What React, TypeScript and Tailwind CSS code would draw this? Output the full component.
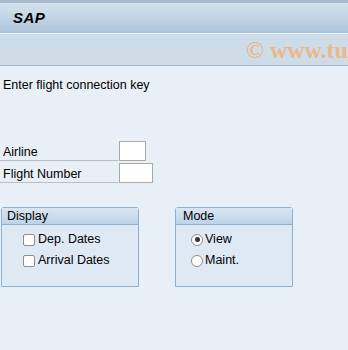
import React from "react";

export default function App() {
  const font = { fontFamily: '"Liberation Sans", Arial, sans-serif' };
  return (
    <div className="w-[348px] h-[350px] bg-[#e8eff6] overflow-hidden text-[12.5px] text-[#000]" style={font}>
      <div className="h-[33px] border-t-[3px] border-[#a9bbcd] bg-gradient-to-b from-[#d7e3ef] to-[#acc4da] flex items-center pl-[13px]">
        <span className="font-bold italic text-[15px] text-black tracking-[0.5px]">SAP</span>
      </div>
      <div className="h-px bg-[#eef3f8]" />
      <div className="h-[32px] bg-[#cedce8] border-b border-[#a4b6c9] flex items-center pl-[246px] overflow-hidden">
        <span className="whitespace-nowrap font-bold text-[24px] leading-[28px] text-[#e9b98c]" style={{ fontFamily: '"Liberation Serif", serif' }}>
          © www.tu
        </span>
      </div>
      <div className="pt-[11px]">
        <div className="pl-[3px] h-[16px] leading-[16px]">Enter flight connection key</div>
        <div className="mt-[48px] flex flex-col">
          <div className="flex items-end h-[20px]">
            <div className="w-[118px] border-b border-[#b8bec4] h-[20px] pl-[3px] leading-[22px]">Airline</div>
            <div className="ml-[1px] w-[27px] h-[20px] bg-white border border-[#a9a9a9]" />
          </div>
          <div className="flex items-end h-[22px]">
            <div className="w-[118px] border-b border-[#b8bec4] h-[20px] pl-[3px] leading-[22px]">Flight Number</div>
            <div className="ml-[1px] w-[34px] h-[20px] bg-white border border-[#a9a9a9]" />
          </div>
        </div>
        <div className="mt-[24px] flex">
          <div className="ml-[1px] w-[138px] h-[80px] border border-[#8fb0d0] rounded-t-[3px] bg-[#dfe9f4] flex flex-col">
            <div className="h-[17px] bg-gradient-to-b from-[#dae6f2] to-[#bdd3e8] border-b border-[#8fb0d0] pl-[5px] leading-[16px]">Display</div>
            <div className="pl-[21px] pt-[4px] flex flex-col">
              <div className="flex items-center gap-[3px] h-[21px]">
                <div className="w-[12px] h-[12px] bg-white border border-[#8c8c8c] rounded-[2px]" />
                <span>Dep. Dates</span>
              </div>
              <div className="flex items-center gap-[3px] h-[21px]">
                <div className="w-[12px] h-[12px] bg-white border border-[#8c8c8c] rounded-[2px]" />
                <span>Arrival Dates</span>
              </div>
            </div>
          </div>
          <div className="ml-[36px] w-[118px] h-[80px] border border-[#8fb0d0] rounded-t-[3px] bg-[#dfe9f4] flex flex-col">
            <div className="h-[17px] bg-gradient-to-b from-[#dae6f2] to-[#bdd3e8] border-b border-[#8fb0d0] pl-[7px] leading-[16px]">Mode</div>
            <div className="pl-[15px] pt-[4px] flex flex-col">
              <div className="flex items-center gap-[2px] h-[21px]">
                <div className="w-[12px] h-[12px] bg-white border border-[#8c8c8c] rounded-full flex items-center justify-center">
                  <div className="w-[5px] h-[5px] rounded-full bg-[#333]" />
                </div>
                <span>View</span>
              </div>
              <div className="flex items-center gap-[2px] h-[21px]">
                <div className="w-[12px] h-[12px] bg-white border border-[#8c8c8c] rounded-full" />
                <span>Maint.</span>
              </div>
            </div>
          </div>
        </div>
      </div>
    </div>
  );
}
